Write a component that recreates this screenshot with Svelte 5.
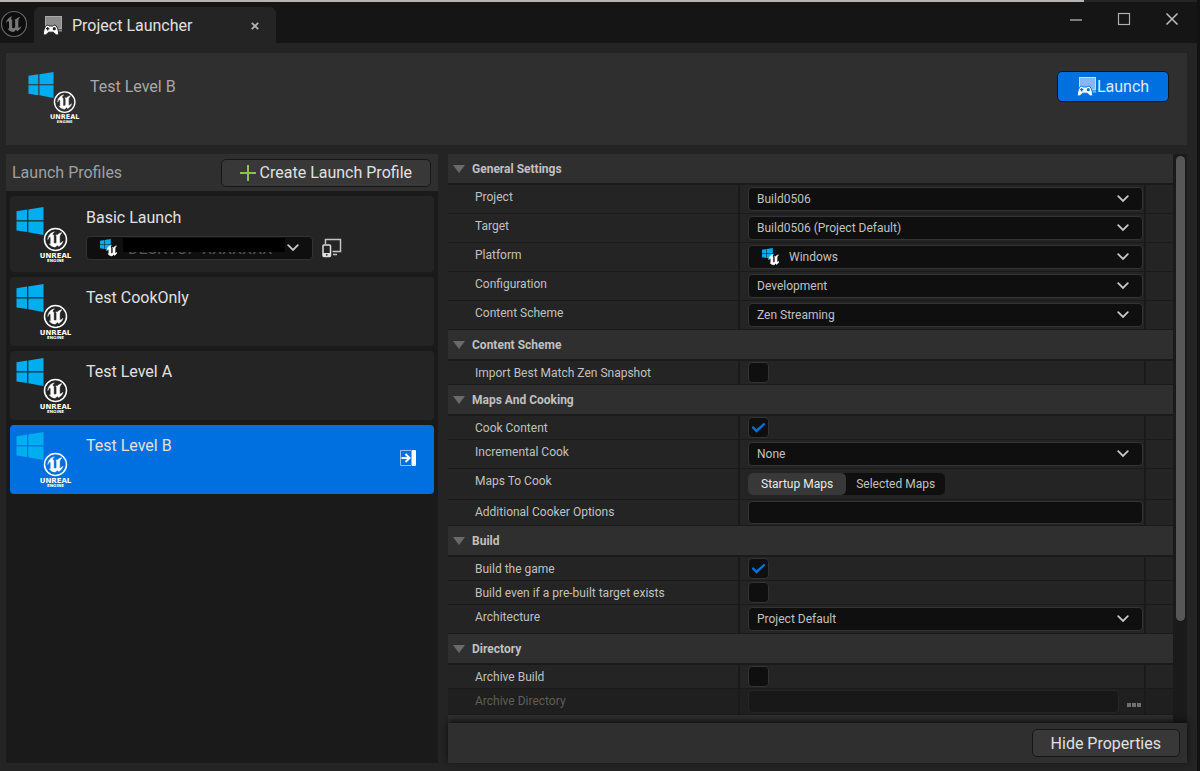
<script>
  const WIN_PATH = 'M0 4.2 10.6 2.6V13.2H0ZM11.8 2.4 27 0V13.2H11.8ZM0 14.4H10.6V25L0 23.4ZM11.8 14.4H27V28L11.8 25.2Z';
  const U_PATH =
    'M19.13 13.729c-.206.997-1.126 3.557-4.06 4.942l-1.179-1.325-1.988 2a7.338 7.338 0 0 1-5.804-2.978 2.859 2.859 0 0 0 .65.123c.326.006.678-.114.678-.66v-5.394a.89.89 0 0 0-1.116-.89c-.92.212-1.656 2.509-1.656 2.509a7.304 7.304 0 0 1 2.528-5.597 7.408 7.408 0 0 1 3.73-1.721c-1.006.573-1.57 1.507-1.57 2.29 0 1.262.76 1.109.984.923v7.28a1.157 1.157 0 0 0 .148.256 1.075 1.075 0 0 0 .88.445c.76 0 1.747-.868 1.747-.868V9.172c0-.6-.452-1.324-.905-1.572 0 0 .838-.149 1.484.346a5.537 5.537 0 0 1 .387-.425c1.508-1.48 2.929-1.902 4.112-2.112 0 0-2.151 1.69-2.151 3.96 0 1.687.043 5.801.043 5.801.799.771 1.986-.342 3.059-1.441Z';

  const profiles = [
    { name: 'Basic Launch', device: 'DESKTOP-XXXXXXX' },
    { name: 'Test CookOnly' },
    { name: 'Test Level A' },
    { name: 'Test Level B' },
  ];
  let selected = $state('Test Level B');

  // kind: combo | check | segment | text | path
  const sections = $state([
    {
      title: 'General Settings',
      open: true,
      rows: [
        { label: 'Project', kind: 'combo', value: 'Build0506' },
        { label: 'Target', kind: 'combo', value: 'Build0506 (Project Default)' },
        { label: 'Platform', kind: 'combo', value: 'Windows', icon: true },
        { label: 'Configuration', kind: 'combo', value: 'Development' },
        { label: 'Content Scheme', kind: 'combo', value: 'Zen Streaming' },
      ],
    },
    {
      title: 'Content Scheme',
      open: true,
      rows: [{ label: 'Import Best Match Zen Snapshot', kind: 'check', value: false }],
    },
    {
      title: 'Maps And Cooking',
      open: true,
      rows: [
        { label: 'Cook Content', kind: 'check', value: true },
        { label: 'Incremental Cook', kind: 'combo', value: 'None' },
        { label: 'Maps To Cook', kind: 'segment', value: 'Startup Maps', options: ['Startup Maps', 'Selected Maps'] },
        { label: 'Additional Cooker Options', kind: 'text', value: '' },
      ],
    },
    {
      title: 'Build',
      open: true,
      rows: [
        { label: 'Build the game', kind: 'check', value: true },
        { label: 'Build even if a pre-built target exists', kind: 'check', value: false },
        { label: 'Architecture', kind: 'combo', value: 'Project Default' },
      ],
    },
    {
      title: 'Directory',
      open: true,
      rows: [
        { label: 'Archive Build', kind: 'check', value: false },
        { label: 'Archive Directory', kind: 'path', value: '', disabled: true },
      ],
    },
  ]);
</script>

{#snippet profileIcon(size)}
  <svg class="profile-icon" width={size} height={size} viewBox="0 0 56 56" aria-hidden="true">
    <path d={WIN_PATH} transform="translate(.5 1)" fill="#00adef" />
    <circle cx="39.5" cy="33.5" r="11" fill="none" stroke="#fff" stroke-width="1.5" />
    <path d={U_PATH} transform="translate(27 21) scale(1.04)" fill="#fff" stroke="#fff" stroke-width=".5" />
    <text x="39.5" y="52" text-anchor="middle" font-size="7" font-weight="700" fill="#fff">UNREAL</text>
    <text x="39.5" y="56" text-anchor="middle" font-size="4" font-weight="700" fill="#fff">ENGINE</text>
  </svg>
{/snippet}

{#snippet platformIcon()}
  <svg class="platform-icon" width="18" height="18" viewBox="0 0 18 18" aria-hidden="true">
    <path d={WIN_PATH} transform="translate(1 0) scale(.4)" fill="#00adef" />
    <path d={U_PATH} transform="translate(4.5 3) scale(.72)" fill="#fff" stroke="#fff" stroke-width=".8" />
  </svg>
{/snippet}

{#snippet launcherIcon(screen, frame, outline)}
  <svg width="20" height="20" viewBox="0 0 20 20" aria-hidden="true">
    <rect x="2.5" y=".5" width="16" height="12" fill={screen} stroke={frame} />
    <path d="M14 14.5h5" stroke={screen} stroke-width="2" />
    <path
      d="M3.400 9.500C4.500 8.800 5.600 9.400 6.200 10h3.600c.8-.7 2-1.200 3-.5 1.600 1.600 2.900 5 2.700 7.900-.2 1.800-2 2-3.200.8l-1.900-2H5.600l-1.900 2c-1.200 1.200-3 1-3.200-.8C.3 14.500 1.800 11 3.400 9.500Z"
      fill="#fff" stroke={outline} stroke-width="1"
    />
    <path d="M3 12.700h3.400M4.700 11v3.400" stroke={outline} stroke-width="1.200" />
    <circle cx="11.300" cy="12.700" r="1.600" fill={outline} />
  </svg>
{/snippet}

{#snippet chevron()}
  <svg class="chevron" width="12" height="8" viewBox="0 0 12 8" aria-hidden="true">
    <path d="M1.200 1.200 6 6l4.800-4.800" fill="none" stroke="#c8c8c8" stroke-width="1.800" stroke-linecap="round" />
  </svg>
{/snippet}

<div class="window">
  <div class="edge"></div>

  <header class="titlebar">
    <svg class="app-logo" width="28" height="28" viewBox="0 0 28 28" aria-hidden="true">
      <circle cx="14" cy="14" r="12.500" fill="#0d0d0d" stroke="#666" stroke-width="1.200" />
      <path d={U_PATH} transform="translate(1 1) scale(1.080)" fill="#777" />
    </svg>
    <div class="tab">
      {@render launcherIcon('#8c8c8c', '#a8a8a8', '#242424')}
      <span>Project Launcher</span>
      <button class="bare" aria-label="Close tab">
        <svg width="8" height="8" viewBox="0 0 8 8"><path d="M.8.8l6.400 6.400M7.200.8.8 7.200" stroke="#b4b4b4" stroke-width="1.800" /></svg>
      </button>
    </div>
    <div class="controls">
      <button class="bare" aria-label="Minimize">
        <svg width="14" height="14" viewBox="0 0 14 14"><path d="M1 8h12" stroke="#888" stroke-width="1.800" /></svg>
      </button>
      <button class="bare" aria-label="Maximize">
        <svg width="14" height="14" viewBox="0 0 14 14"><rect x="1.500" y="1.500" width="11" height="11" fill="none" stroke="#b0b0b0" stroke-width="1.200" /></svg>
      </button>
      <button class="bare" aria-label="Close">
        <svg width="14" height="14" viewBox="0 0 14 14"><path d="M1.500 1.500l11 11M12.500 1.500l-11 11" stroke="#c0c0c0" stroke-width="1.500" /></svg>
      </button>
    </div>
  </header>

  <section class="summary">
    {@render profileIcon(52)}
    <h1>{selected}</h1>
    <button class="launch">
      {@render launcherIcon('#85b8f0', '#c4dcf8', '#0070e0')}
      Launch
    </button>
  </section>

  <main>
    <section class="profiles">
      <div class="profiles-head">
        <h2>Launch Profiles</h2>
        <button class="btn">
          <svg width="16" height="16" viewBox="0 0 16 16" aria-hidden="true"><path d="M8 0v16M0 8h16" stroke="#8bc24a" stroke-width="2" /></svg>
          Create Launch Profile
        </button>
      </div>
      <div class="list">
        {#each profiles as p}
          <div class="card" class:selected={p.name === selected} class:tall={p.device}>
            {@render profileIcon(56)}
            <div class="card-body">
              <button class="bare name" onclick={() => (selected = p.name)}>{p.name}</button>
              {#if p.device}
                <div class="device-row">
                  <div class="combo device">
                    {@render platformIcon()}
                    <select aria-label="Device"><option>{p.device}</option></select>
                    <span class="mask"></span>
                    {@render chevron()}
                  </div>
                  <button class="bare" aria-label="Devices">
                    <svg width="20" height="20" viewBox="0 0 20 20">
                      <path d="M3.500 6V1.500h15v12h-8" fill="none" stroke="#c4c4c4" stroke-width="1.500" />
                      <path d="M11 16.500h4" stroke="#c4c4c4" stroke-width="1.500" />
                      <rect x="1" y="7" width="7.500" height="11.500" rx="1" fill="none" stroke="#e0e0e0" stroke-width="1.500" />
                      <path d="M1 15h7.500v3.500H1Z" fill="#e0e0e0" />
                      <circle cx="4.750" cy="16.800" r=".9" fill="#242424" />
                    </svg>
                  </button>
                </div>
              {/if}
            </div>
            {#if p.name === selected}
              <svg class="open-icon" width="18" height="18" viewBox="0 0 18 18" aria-hidden="true">
                <path d="M12 1.500H1.500v15H12" fill="none" stroke="#8fc0f4" stroke-width="1" />
                <rect x="12.500" y="1" width="4.500" height="16" rx="1" fill="#fff" />
                <path d="M2.500 9h8M6.500 5l4 4-4 4" fill="none" stroke="#fff" stroke-width="2" />
              </svg>
            {/if}
          </div>
        {/each}
      </div>
    </section>

    <section class="properties">
      <div class="scroller">
        <div class="sections">
          {#each sections as s, si}
            <button class="section-head" aria-expanded={s.open} onclick={() => (s.open = !s.open)}>
              <svg class:closed={!s.open} width="12" height="8" viewBox="0 0 12 8" aria-hidden="true"><path d="M0 0h12L6 8Z" fill="#6a6a6a" /></svg>
              {s.title}
            </button>
            {#if s.open}
              {#each s.rows as row, ri}
                {@const id = `prop-${si}-${ri}`}
                <div class="row row-{row.kind}" class:disabled={row.disabled}>
                  <label for={id}>{row.label}</label>
                  <div class="value">
                    {#if row.kind === 'combo'}
                      <div class="combo" class:with-icon={row.icon}>
                        {#if row.icon}{@render platformIcon()}{/if}
                        <select {id}><option>{row.value}</option></select>
                        {@render chevron()}
                      </div>
                    {:else if row.kind === 'check'}
                      <input {id} type="checkbox" bind:checked={row.value} />
                    {:else if row.kind === 'segment'}
                      <div class="segments" {id} role="group" aria-label={row.label}>
                        {#each row.options as o}
                          <button class:on={o === row.value} onclick={() => (row.value = o)}>{o}</button>
                        {/each}
                      </div>
                    {:else}
                      <input {id} type="text" bind:value={row.value} disabled={row.disabled} />
                      {#if row.kind === 'path'}
                        <button class="bare browse" aria-label="Browse" disabled>
                          <svg width="14" height="4" viewBox="0 0 14 4"><path d="M0 0h4v4H0ZM5 0h4v4H5ZM10 0h4v4h-4Z" fill="#707070" /></svg>
                        </button>
                      {/if}
                    {/if}
                  </div>
                  <div class="tail"></div>
                </div>
              {/each}
            {/if}
          {/each}
          <div class="rest"></div>
        </div>
        <div class="track"><div class="thumb"></div></div>
      </div>
      <footer>
        <button class="btn">Hide Properties</button>
      </footer>
    </section>
  </main>
</div>

<style>
  :global(body) {
    margin: 0;
    background: #151515;
  }

  .window {
    display: flex;
    flex-direction: column;
    height: 100vh;
    box-sizing: border-box;
    border-right: 3px solid #121212;
    background: #242424;
    color: #c0c0c0;
    font-family: Roboto, 'Noto Sans', sans-serif;
    font-size: 12px;
  }

  button,
  input,
  select {
    font: inherit;
    color: inherit;
  }

  .bare {
    display: flex;
    padding: 0;
    border: 0;
    background: none;
  }

  svg {
    flex: none;
  }

  .edge {
    height: 2px;
    background: linear-gradient(90deg, #b8b4b2 calc(100% - 113px), #242424 calc(100% - 113px));
    border-bottom: 3px solid #151515;
  }

  /* Title bar */
  .titlebar {
    display: flex;
    height: 38px;
    background: #151515;
  }

  .app-logo {
    align-self: center;
    margin-right: 6px;
  }

  .tab {
    display: flex;
    align-items: center;
    gap: 9px;
    width: 242px;
    box-sizing: border-box;
    margin-top: 2px;
    padding: 1px 17px 0 9px;
    border-radius: 6px 6px 0 0;
    background: #242424;
    color: #e0e0e0;
    font-size: 16px;
  }

  .tab span {
    flex: 1;
  }

  .controls {
    display: flex;
    gap: 34px;
    margin: 7px 18px 0 auto;
    align-items: flex-start;
  }

  /* Selected profile */
  .summary {
    display: flex;
    align-items: flex-start;
    height: 92px;
    box-sizing: border-box;
    margin: 10px 10px 9px 6px;
    padding: 18px 18px 0 22px;
    background: #2f2f2f;
  }

  .summary h1 {
    flex: 1;
    margin: 6px 0 0 10px;
    font-size: 16px;
    line-height: 20px;
    font-weight: 400;
    color: #a8a8a8;
  }

  .launch {
    display: flex;
    align-items: center;
    justify-content: center;
    width: 112px;
    height: 31px;
    padding: 0;
    border: 1px solid #151515;
    border-radius: 5px;
    background: #0070e0;
    color: #dcebfb;
    font-size: 16px;
  }

  main {
    display: flex;
    gap: 10px;
    flex: 1;
    min-height: 0;
    margin: 0 10px 8px 6px;
  }

  /* Profile list */
  .profiles {
    display: flex;
    flex-direction: column;
    width: 432px;
  }

  .profiles-head {
    display: flex;
    align-items: center;
    justify-content: space-between;
    height: 37px;
    padding: 0 7px 0 6px;
    background: #2f2f2f;
  }

  .profiles-head h2 {
    margin: 0;
    font-size: 16px;
    font-weight: 400;
    color: #a0a0a0;
  }

  .btn {
    display: flex;
    align-items: center;
    gap: 4px;
    height: 28px;
    padding: 0 18px;
    border: 1px solid #161616;
    border-radius: 5px;
    background: #383838;
    color: #e0e0e0;
    font-size: 16px;
  }

  .list {
    display: flex;
    flex-direction: column;
    gap: 5px;
    flex: 1;
    padding: 5px 4px;
    background: #1a1a1a;
  }

  .card {
    display: flex;
    min-height: 69px;
    box-sizing: border-box;
    padding: 6px 17px 6px 6px;
    border-radius: 4px;
    background: #242424;
  }

  .card.tall {
    min-height: 76px;
    padding-top: 10px;
  }

  .card.selected {
    background: #0070e0;
  }

  .card-body {
    display: flex;
    flex-direction: column;
    gap: 8px;
    flex: 1;
    margin-left: 14px;
    padding-top: 5px;
  }

  .card.tall .card-body {
    padding-top: 2px;
  }

  .name {
    align-self: flex-start;
    font-size: 16px;
    line-height: 20px;
    color: #e0e0e0;
  }

  .open-icon {
    align-self: center;
    margin-bottom: 4px;
  }

  .device-row {
    display: flex;
    align-items: center;
    gap: 9px;
  }

  .profile-icon text {
    font-family: 'DejaVu Sans', sans-serif;
  }

  /* Combo boxes: icon, mask and chevron lie over the select */
  .combo {
    position: relative;
    display: flex;
    align-items: center;
    flex: 1;
  }

  .combo select {
    width: 100%;
    height: 24px;
    padding: 0 30px 0 8px;
    border: 1px solid #333;
    border-radius: 4px;
    background: #0f0f0f;
    appearance: none;
  }

  .chevron {
    position: absolute;
    right: 14px;
    pointer-events: none;
  }

  .platform-icon {
    position: absolute;
    left: 13px;
    pointer-events: none;
  }

  .with-icon select {
    padding-left: 40px;
  }

  .device {
    flex: none;
    width: 227px;
  }

  .device select {
    padding-left: 41px;
    color: #555;
    font-size: 16px;
  }

  .mask {
    position: absolute;
    left: 37px;
    right: 28px;
    top: 2px;
    height: 14px;
    background: #000;
    pointer-events: none;
  }

  /* Properties */
  .properties {
    display: flex;
    flex-direction: column;
    flex: 1;
    min-width: 0;
  }

  .scroller {
    display: flex;
    flex: 1;
    min-height: 0;
  }

  .sections {
    display: flex;
    flex-direction: column;
    flex: 1;
    overflow: hidden;
  }

  .section-head {
    display: flex;
    align-items: center;
    gap: 7px;
    flex: none;
    height: 31px;
    padding: 0 5px;
    border: 0;
    border-bottom: 2px solid #1a1a1a;
    background: #2f2f2f;
    font-weight: 700;
  }

  .closed {
    transform: rotate(-90deg);
  }

  .row {
    display: grid;
    grid-template-columns: 40% 1fr 27px;
    flex: none;
    height: 29px;
    box-sizing: border-box;
    border-bottom: 1px solid #1a1a1a;
  }

  .row-check {
    height: 24px;
  }

  .row-segment {
    height: 31px;
  }

  .row-text,
  .row-path {
    height: 26px;
  }

  .row label {
    padding: 4px 0 0 27px;
    line-height: 16px;
  }

  .value {
    display: flex;
    align-items: center;
    padding: 0 1px 0 8px;
    border: solid #1a1a1a;
    border-width: 0 2px;
  }

  input[type='text'] {
    flex: 1;
    height: 23px;
    box-sizing: border-box;
    border: 1px solid #333;
    border-radius: 4px;
    background: #0f0f0f;
  }

  input[type='checkbox'] {
    display: grid;
    place-items: center;
    width: 21px;
    height: 21px;
    box-sizing: border-box;
    margin: 0;
    border: 1px solid #333;
    border-radius: 4px;
    background: #0f0f0f;
    appearance: none;
  }

  input[type='checkbox']:checked::before {
    content: '';
    width: 14px;
    height: 11px;
    background: #0070e0;
    clip-path: polygon(0 50%, 12% 36%, 36% 66%, 88% 6%, 100% 20%, 36% 98%);
  }

  .segments {
    display: flex;
    border-radius: 5px;
    background: #0f0f0f;
  }

  .segments button {
    height: 22px;
    padding: 0 10px;
    border: 0;
    border-radius: 5px;
    background: none;
  }

  .segments .on {
    padding: 0 13px;
    background: #383838;
    color: #e8e8e8;
  }

  .disabled {
    background: #1f1f1f;
    color: #5e5e5e;
  }

  .disabled input {
    background: #181818;
    border-color: #262626;
  }

  .browse {
    padding: 6px 2px 0 8px;
  }

  .rest {
    flex: 1;
    background: #2f2f2f;
  }

  .track {
    width: 14px;
    box-sizing: border-box;
    padding: 2px 2px 0 3px;
    background: #1a1a1a;
  }

  .thumb {
    height: 82%;
    border-radius: 5px;
    background: #575757;
  }

  footer {
    display: flex;
    justify-content: flex-end;
    position: relative;
    padding: 6px 7px;
    background: #2f2f2f;
    box-shadow: 0 -2px 6px #0c0c0c;
  }
</style>
